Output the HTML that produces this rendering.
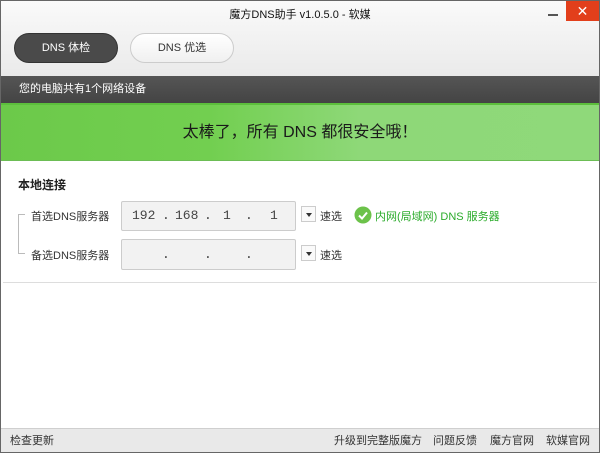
<!DOCTYPE html>
<html><head><meta charset="utf-8"><style>
*{margin:0;padding:0;box-sizing:border-box}
body{width:600px;height:453px;overflow:hidden;font-family:"Liberation Sans","Noto Sans CJK SC",sans-serif;font-size:12px;color:#333;background:#fff;position:relative}
.abs{position:absolute}
#frame{left:0;top:0;width:600px;height:453px;border:1px solid #666;z-index:10;pointer-events:none}
#top{left:0;top:0;width:600px;height:76px;background:linear-gradient(#fafafa,#eaeaea)}
.btn{top:33px;height:30px;border-radius:15px;text-align:center;line-height:28px;font-size:11px}
#dark{left:0;top:76px;width:600px;height:27px;background:linear-gradient(#555,#444);color:#fff;line-height:27px;padding-left:19px;font-size:11px}
#green{left:0;top:103px;width:600px;height:58px;background:linear-gradient(90deg,#6cc94a 0%,#72cf50 35%,#8ed878 60%,#8fd97a 100%);border-top:2px solid #5cbf3c;border-bottom:1px solid #6cbd55;text-align:center;line-height:56px;font-size:16px;color:#1a1a1a}
.inp{left:121px;width:175px;height:30px;background:#f2f2f2;border:1px solid #ccc;border-radius:2px;font-size:13px;color:#444;font-family:"Liberation Mono",monospace}
.dd{left:301px;width:15px;height:16px;border:1px solid #ccc;background:#fafafa}
.dd:after{content:"";position:absolute;left:4px;top:6px;border-left:3px solid transparent;border-right:3px solid transparent;border-top:4px solid #333}
.lbl{font-size:11px}
#foot{left:0;top:428px;width:600px;height:25px;background:#e9e9e9;border-top:1px solid #cfcfcf;font-size:11px;line-height:24px;color:#333}
</style></head><body>
<div class="abs" id="top"></div>
<div class="abs" style="left:0;top:6px;width:600px;text-align:center;font-size:11px;color:#111">魔方DNS助手 v1.0.5.0 - 软媒</div>
<div class="abs" style="left:548px;top:14px;width:10px;height:2px;background:#555"></div>
<div class="abs" style="left:566px;top:1px;width:33px;height:20px;background:#e23f1b;color:#fff;text-align:center;line-height:20px;font-size:14px">✕</div>
<div class="abs btn" style="left:14px;width:104px;background:#4a4a4a;border:1px solid #333;color:#fff">DNS 体检</div>
<div class="abs btn" style="left:130px;width:104px;background:linear-gradient(#fff,#f0f0f0);border:1px solid #ccc;color:#333">DNS 优选</div>
<div class="abs" id="dark">您的电脑共有1个网络设备</div>
<div class="abs" id="green">太棒了，所有 DNS 都很安全哦！</div>
<div class="abs" style="left:18px;top:176px;font-size:12px;font-weight:bold;color:#222">本地连接</div>
<div class="abs" style="left:18px;top:214px;width:1px;height:40px;background:#bbb"></div>
<div class="abs" style="left:18px;top:214px;width:7px;height:1px;background:#bbb"></div>
<div class="abs" style="left:18px;top:253px;width:7px;height:1px;background:#bbb"></div>
<div class="abs lbl" style="left:31px;top:208px">首选DNS服务器</div>
<div class="abs lbl" style="left:31px;top:247px">备选DNS服务器</div>
<div class="abs inp" style="top:201px"><span class="abs" style="left:10px;top:6px">192</span><span class="abs" style="left:40px;top:6px">.</span><span class="abs" style="left:53px;top:6px">168</span><span class="abs" style="left:82px;top:6px">.</span><span class="abs" style="left:101px;top:6px">1</span><span class="abs" style="left:123px;top:6px">.</span><span class="abs" style="left:148px;top:6px">1</span></div>
<div class="abs inp" style="top:239px;height:31px"><span class="abs" style="left:40px;top:7px">.</span><span class="abs" style="left:82px;top:7px">.</span><span class="abs" style="left:123px;top:7px">.</span></div>
<div class="abs dd" style="top:206px"></div>
<div class="abs dd" style="top:245px"></div>
<div class="abs lbl" style="left:320px;top:208px">速选</div>
<div class="abs lbl" style="left:320px;top:247px">速选</div>
<svg class="abs" style="left:354px;top:206px" width="18" height="18"><circle cx="9" cy="9" r="8.5" fill="#6cc24a"/><path d="M5 9.5l3 3 5-6" stroke="#fff" stroke-width="2" fill="none"/></svg>
<div class="abs lbl" style="left:375px;top:208px;color:#2aab2a">内网(局域网) DNS 服务器</div>
<div class="abs" style="left:3px;top:282px;width:594px;height:1px;background:#ddd"></div>
<div class="abs" id="foot"><span class="abs" style="left:10px">检查更新</span><span class="abs" style="left:334px">升级到完整版魔方</span><span class="abs" style="left:433px">问题反馈</span><span class="abs" style="left:490px">魔方官网</span><span class="abs" style="left:546px">软媒官网</span></div>
<div class="abs" id="frame"></div>
</body></html>
